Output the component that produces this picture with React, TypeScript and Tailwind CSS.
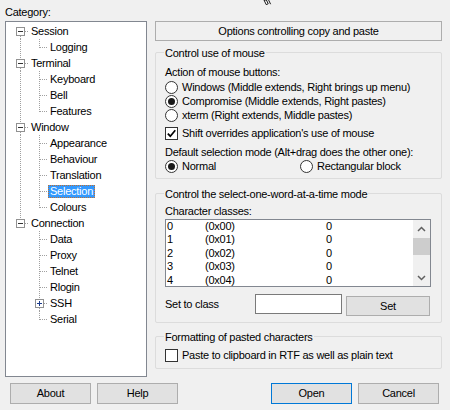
import type { ReactNode } from "react";

type Child = { label: string; plus?: boolean };
type Branch = { label: string; children: Child[] };

const tree: Branch[] = [
  { label: "Session", children: [{ label: "Logging" }] },
  { label: "Terminal", children: [{ label: "Keyboard" }, { label: "Bell" }, { label: "Features" }] },
  {
    label: "Window",
    children: [
      { label: "Appearance" },
      { label: "Behaviour" },
      { label: "Translation" },
      { label: "Selection" },
      { label: "Colours" },
    ],
  },
  {
    label: "Connection",
    children: [
      { label: "Data" },
      { label: "Proxy" },
      { label: "Telnet" },
      { label: "Rlogin" },
      { label: "SSH", plus: true },
      { label: "Serial" },
    ],
  },
];

const selected = "Selection";
const dot = { stroke: "#a0a0a0", strokeDasharray: "1 1", shapeRendering: "crispEdges" as const };

const ExpandBox = ({ x, plus }: { x: number; plus?: boolean }) => (
  <g shapeRendering="crispEdges">
    <rect x={x + 0.5} y={4.5} width={8} height={8} fill="#fff" stroke="#919191" />
    <line x1={x + 2} y1={8.5} x2={x + 7} y2={8.5} stroke={plus ? "#1c3c8c" : "#333"} />
    {plus && <line x1={x + 4.5} y1={6} x2={x + 4.5} y2={11} stroke="#1c3c8c" />}
  </g>
);

const Label = ({ text }: { text: string }) =>
  text === selected ? (
    <span className="px-[2px] leading-[13px] bg-[#3399ff] text-white outline-1 outline-dotted outline-[#c07030] -outline-offset-1">
      {text}
    </span>
  ) : (
    <span className="px-[2px] leading-[13px]">{text}</span>
  );

function TreeView() {
  return (
    <div className="pt-[1px]">
      {tree.map((branch, bi) => {
        const first = bi === 0;
        const lastRoot = bi === tree.length - 1;
        return (
          <div key={branch.label}>
            <div className="flex items-center h-[16px]">
              <svg width={23} height={16} className="shrink-0">
                {!first && <line x1={14.5} y1={0} x2={14.5} y2={4} {...dot} />}
                {!lastRoot && <line x1={14.5} y1={13} x2={14.5} y2={16} {...dot} />}
                <line x1={19} y1={8.5} x2={23} y2={8.5} {...dot} />
                <ExpandBox x={10} />
              </svg>
              <Label text={branch.label} />
            </div>
            {branch.children.map((child, ci) => {
              const lastChild = ci === branch.children.length - 1;
              return (
                <div key={child.label} className="flex items-center h-[16px]">
                  <svg width={42} height={16} className="shrink-0">
                    {!lastRoot && <line x1={14.5} y1={0} x2={14.5} y2={16} {...dot} />}
                    {child.plus ? (
                      <>
                        <line x1={33.5} y1={0} x2={33.5} y2={4} {...dot} />
                        {!lastChild && <line x1={33.5} y1={13} x2={33.5} y2={16} {...dot} />}
                        <line x1={38} y1={8.5} x2={42} y2={8.5} {...dot} />
                        <ExpandBox x={29} plus />
                      </>
                    ) : (
                      <>
                        <line x1={33.5} y1={0} x2={33.5} y2={lastChild ? 9 : 16} {...dot} />
                        <line x1={34} y1={8.5} x2={42} y2={8.5} {...dot} />
                      </>
                    )}
                  </svg>
                  <Label text={child.label} />
                </div>
              );
            })}
          </div>
        );
      })}
    </div>
  );
}

const Radio = ({ on, children }: { on?: boolean; children: ReactNode }) => (
  <div className="flex items-center gap-[4px] h-[14px]">
    <span className="w-[13px] h-[13px] rounded-full border border-[#333] bg-white flex items-center justify-center shrink-0">
      {on && <span className="w-[7px] h-[7px] rounded-full bg-[#1a1a1a]" />}
    </span>
    <span className="leading-[14px]">{children}</span>
  </div>
);

const Check = ({ on, children }: { on?: boolean; children: ReactNode }) => (
  <div className="flex items-center gap-[4px] h-[14px]">
    <span className="w-[13px] h-[13px] border border-[#333] bg-white flex items-center justify-center shrink-0">
      {on && (
        <svg width={11} height={11} viewBox="0 0 11 11">
          <path d="M1.8 5.6 L4.3 8.2 L9.3 2.2" fill="none" stroke="#000" strokeWidth={1.7} />
        </svg>
      )}
    </span>
    <span className="leading-[14px]">{children}</span>
  </div>
);

const Group = ({ title, className, children }: { title: string; className: string; children: ReactNode }) => (
  <div className={`border border-[#dcdcdc] rounded-[2px] pl-[9px] ${className}`}>
    <div className="-mt-[7px] ml-[-1px] px-[1px] w-fit bg-[#f0f0f0] leading-[14px]">{title}</div>
    {children}
  </div>
);

const Button = ({ label, primary, className = "" }: { label: string; primary?: boolean; className?: string }) => (
  <div
    className={`w-[81px] h-[21px] flex items-center justify-center bg-[#e1e1e1] border ${
      primary ? "border-[#0078d7]" : "border-[#adadad]"
    } ${className}`}
  >
    {label}
  </div>
);

const Chevron = ({ up }: { up?: boolean }) => (
  <svg width={9} height={6} viewBox="0 0 9 6">
    <path d={up ? "M1 5 L4.5 1.5 L8 5" : "M1 1 L4.5 4.5 L8 1"} fill="none" stroke="#606060" strokeWidth={1.5} />
  </svg>
);

const classes = [0, 1, 2, 3, 4];

export default function App() {
  return (
    <div className="relative w-[450px] h-[410px] overflow-hidden bg-[#f0f0f0] text-black text-[11px] tracking-[-0.25px] font-['Liberation_Sans',Arial,sans-serif] select-none">
      {/* pointer tail peeking in at the top edge */}
      <svg width={10} height={6} className="absolute left-[263px] top-0" viewBox="0 0 10 6">
        <path d="M1 0 L3.2 4.6 L5.2 3.8 L3.4 0 Z" fill="#fff" stroke="#000" strokeWidth={0.9} />
        <path d="M5.6 0 L7.6 4.2" fill="none" stroke="#000" strokeWidth={0.9} />
      </svg>

      <div className="flex pt-[5px] pl-[5px] gap-[8px]">
        <div className="w-[142px]">
          <div className="leading-[14px]">Category:</div>
          <div className="mt-[2px] h-[356px] bg-white border border-[#828790]">
            <TreeView />
          </div>
        </div>

        <div className="w-[287px] pt-[16px]">
          <div className="h-[20px] border border-[#adadad] flex items-center justify-center">
            Options controlling copy and paste
          </div>

          <Group title="Control use of mouse" className="mt-[11px] h-[127px]">
            <div className="mt-[5px] leading-[14px]">Action of mouse buttons:</div>
            <div className="mt-[1px]">
              <Radio>Windows (Middle extends, Right brings up menu)</Radio>
              <Radio on>Compromise (Middle extends, Right pastes)</Radio>
              <Radio>xterm (Right extends, Middle pastes)</Radio>
            </div>
            <div className="mt-[4px]">
              <Check on>Shift overrides application's use of mouse</Check>
            </div>
            <div className="mt-[5px] leading-[14px]">Default selection mode (Alt+drag does the other one):</div>
            <div className="flex">
              <div className="w-[135px]">
                <Radio on>Normal</Radio>
              </div>
              <Radio>Rectangular block</Radio>
            </div>
          </Group>

          <Group title="Control the select-one-word-at-a-time mode" className="mt-[14px] h-[130px]">
            <div className="mt-[3px] leading-[14px]">Character classes:</div>
            <div className="mt-[1px] w-[266px] h-[68px] bg-white border border-[#828790] flex">
              <div className="flex-1 pl-[1px] overflow-hidden">
                {classes.map((n) => (
                  <div key={n} className="flex leading-[13.4px]">
                    <span className="w-[38px]">{n}</span>
                    <span className="w-[121px]">(0x0{n})</span>
                    <span>0</span>
                  </div>
                ))}
              </div>
              <div className="w-[17px] bg-[#f0f0f0] flex flex-col">
                <div className="h-[17px] flex items-center justify-center">
                  <Chevron up />
                </div>
                <div className="h-[17px] mt-[1px] bg-[#cdcdcd]" />
                <div className="flex-1" />
                <div className="h-[17px] flex items-center justify-center">
                  <Chevron />
                </div>
              </div>
            </div>
            <div className="flex mt-[7px]">
              <div className="w-[90px] leading-[20px]">Set to class</div>
              <div className="w-[87px] h-[20px] bg-white border border-[#7a7a7a]" />
              <Button label="Set" className="ml-[4px] mt-[2px] !w-[84px] !h-[20px]" />
            </div>
          </Group>

          <Group title="Formatting of pasted characters" className="mt-[13px] h-[33px]">
            <div className="mt-[4px]">
              <Check>Paste to clipboard in RTF as well as plain text</Check>
            </div>
          </Group>
        </div>
      </div>

      <div className="flex mt-[6px] pl-[10px] pr-[11px]">
        <Button label="About" />
        <Button label="Help" className="ml-[6px]" />
        <Button label="Open" primary className="ml-auto" />
        <Button label="Cancel" className="ml-[6px]" />
      </div>
    </div>
  );
}
